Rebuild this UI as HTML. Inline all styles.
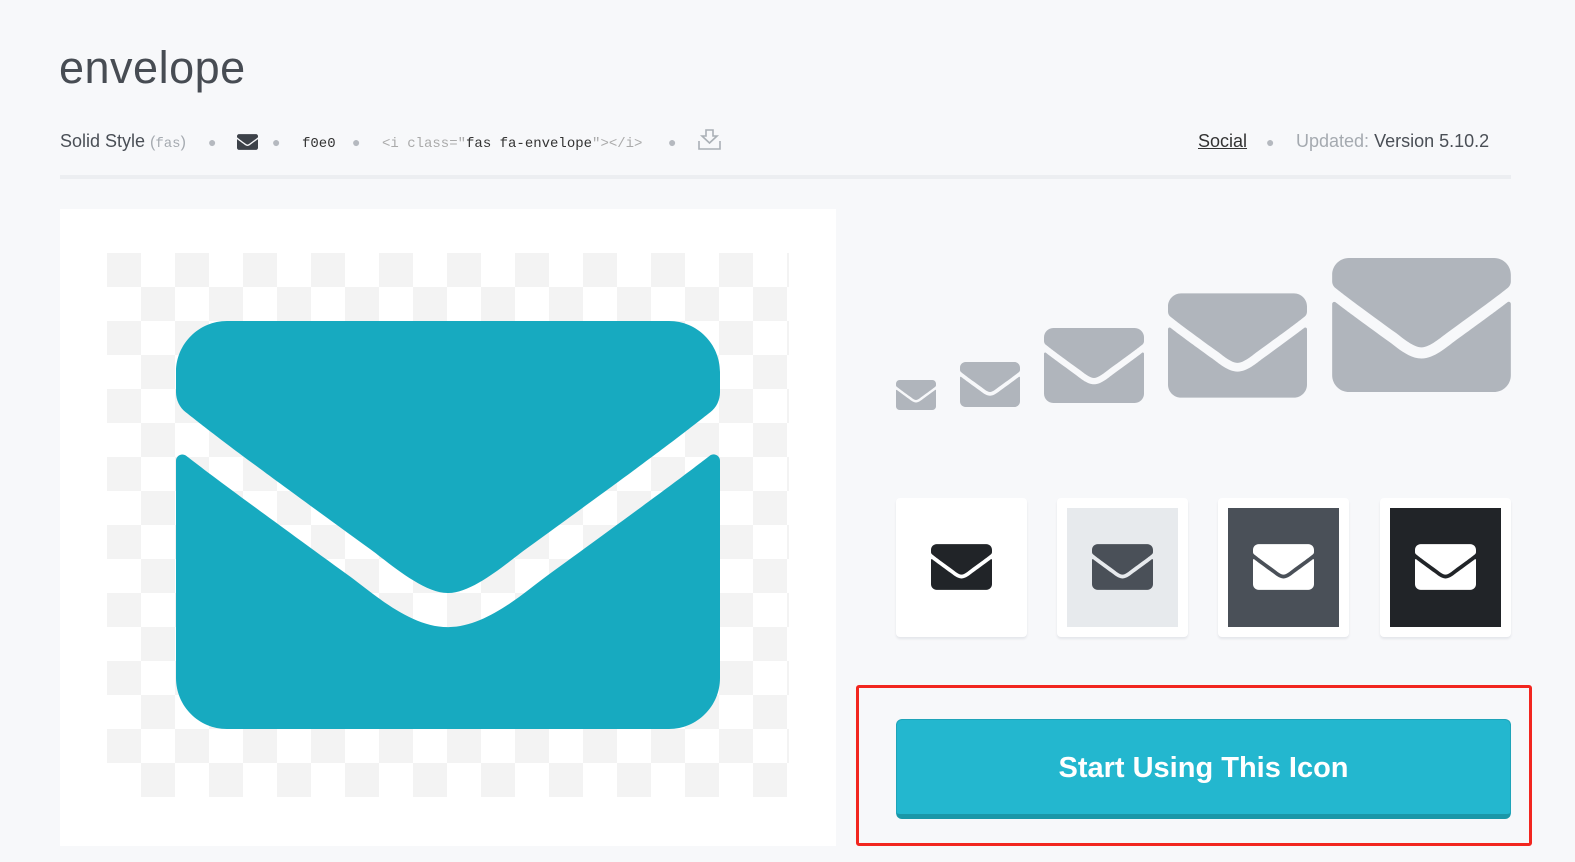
<!DOCTYPE html>
<html><head><style>
body{margin:0;width:1575px;height:862px;background:#f7f8fa;font-family:"Liberation Sans",sans-serif;position:relative;overflow:hidden;color:#4a4f56}
.a{position:absolute}
h1{position:absolute;left:59px;top:42px;margin:0;font-size:45px;font-weight:normal;color:#474c53;letter-spacing:0.5px}
.meta{top:131px;font-size:18px;white-space:nowrap}
.dot{color:#b5b9bf;font-size:14px}
.mono{font-family:"Liberation Mono",monospace;font-size:14px}
.tile{position:absolute;top:498px;width:131px;height:139px;background:#fff;border-radius:4px;box-shadow:0 2px 2px #e4e6ea}
.tile .in{position:absolute;left:10px;top:10px;width:111px;height:119px}
</style></head><body>
<svg width="0" height="0" style="position:absolute"><defs><path id="env" d="M502.3 190.8c3.9-3.1 9.7-.2 9.7 4.7V400c0 26.5-21.5 48-48 48H48c-26.5 0-48-21.5-48-48V195.6c0-5 5.700-7.8 9.7-4.7 22.4 17.4 52.1 39.5 154.1 113.6 21.1 15.4 56.7 47.8 92.2 47.6 35.7.3 72-32.8 92.3-47.6 102-74.1 131.6-96.3 154-113.7zM256 320c23.2.4 56.6-29.2 73.4-41.4 132.7-96.3 142.8-104.7 173.4-128.7 5.8-4.5 9.2-11.5 9.2-18.9v-19c0-26.5-21.5-48-48-48H48C21.5 64 0 85.5 0 112v19c0 7.4 3.4 14.3 9.2 18.9 30.6 23.9 40.7 32.4 173.4 128.7 16.8 12.2 50.2 41.8 73.4 41.4z"/></defs></svg>
<h1>envelope</h1>
<div class="a meta" style="left:60px">Solid Style <span style="color:#a5aab0;font-size:16px">(<span class="mono">fas</span>)</span></div>
<span class="a dot" style="left:208px;top:134px">●</span>
<svg class="a" style="left:237px;top:134px" width="21" height="16" viewBox="0 64 512 384"><use href="#env" fill="#3d4249"/></svg>
<span class="a dot" style="left:272px;top:134px">●</span>
<span class="a mono" style="left:302px;top:136px;color:#333">f0e0</span>
<span class="a dot" style="left:352px;top:134px">●</span>
<span class="a mono" style="left:382px;top:136px;color:#aaa">&lt;i class="<span style="color:#333">fas fa-envelope</span>"&gt;&lt;/i&gt;</span>
<span class="a dot" style="left:668px;top:134px">●</span>
<svg class="a" style="left:698px;top:129px" width="23" height="21" viewBox="0 0 23 21" fill="none" stroke="#aab0b6" stroke-width="1.6"><path d="M8 1h7v6h4l-7.5 7L4 7h4z"/><path d="M1 12v8h21v-8"/></svg>
<div class="a meta" style="left:1198px;text-decoration:underline;color:#333">Social</div>
<span class="a dot" style="left:1266px;top:134px">●</span>
<div class="a meta" style="left:1296px;color:#a5aab0">Updated: <span style="color:#4a4f56">Version 5.10.2</span></div>
<div class="a" style="left:60px;top:175px;width:1451px;height:4px;background:#eceef1"></div>
<div class="a" style="left:60px;top:209px;width:776px;height:637px;background:#fff"></div>
<div class="a" style="left:107px;top:253px;width:682px;height:544px;background-color:#fff;background-image:conic-gradient(#f3f3f3 0 25%,transparent 0 50%,#f3f3f3 0 75%,transparent 0);background-size:68px 68px;background-position:34px 0"></div>
<svg class="a" style="left:176px;top:321px" width="544" height="408" viewBox="0 64 512 384"><use href="#env" fill="#17aac0"/></svg>
<svg class="a" style="left:896px;top:380px" width="40" height="30" viewBox="0 64 512 384"><use href="#env" fill="#b0b5bc"/></svg>
<svg class="a" style="left:960px;top:362px" width="60" height="45" viewBox="0 64 512 384"><use href="#env" fill="#b0b5bc"/></svg>
<svg class="a" style="left:1044px;top:328px" width="100" height="75" viewBox="0 64 512 384"><use href="#env" fill="#b0b5bc"/></svg>
<svg class="a" style="left:1168px;top:293px" width="139" height="105" viewBox="0 64 512 384"><use href="#env" fill="#b0b5bc"/></svg>
<svg class="a" style="left:1332px;top:258px" width="179" height="134" viewBox="0 64 512 384"><use href="#env" fill="#b0b5bc"/></svg>
<div class="tile" style="left:896px"><div class="in" style="background:#fff"></div><svg class="a" style="left:35px;top:46px" width="61" height="46" viewBox="0 64 512 384"><use href="#env" fill="#212428"/></svg></div>
<div class="tile" style="left:1057px"><div class="in" style="background:#e7eaed"></div><svg class="a" style="left:35px;top:46px" width="61" height="46" viewBox="0 64 512 384"><use href="#env" fill="#4a5058"/></svg></div>
<div class="tile" style="left:1218px"><div class="in" style="background:#4a5058"></div><svg class="a" style="left:35px;top:46px" width="61" height="46" viewBox="0 64 512 384"><use href="#env" fill="#fff"/></svg></div>
<div class="tile" style="left:1380px"><div class="in" style="background:#212428"></div><svg class="a" style="left:35px;top:46px" width="61" height="46" viewBox="0 64 512 384"><use href="#env" fill="#fff"/></svg></div>
<div class="a" style="left:856px;top:685px;width:670px;height:155px;border:3px solid #f2261f;border-radius:3px"></div>
<div class="a" style="left:896px;top:719px;width:613px;height:94px;background:#23b7cf;border:1px solid #1ea4b9;border-bottom:5px solid #1a97a8;border-radius:6px;color:#fff;font-size:29px;text-align:center;line-height:96px;font-weight:bold">Start Using This Icon</div>
</body></html>
